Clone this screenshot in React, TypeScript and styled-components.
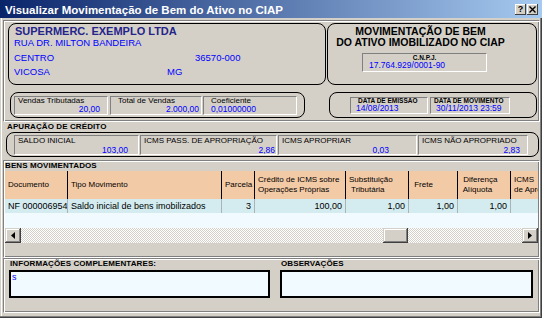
import styled, { createGlobalStyle } from "styled-components";

const UI = `"Liberation Sans", Arial, sans-serif`;

const GlobalStyle = createGlobalStyle`
  *, *::before, *::after { box-sizing: border-box; }
  html, body { margin: 0; padding: 0; background: #d4d0c8; }
  body { font-family: ${UI}; }
`;

const Window = styled.div`
  width: 542px;
  height: 318px;
  background: #d4d0c8;
  display: flex;
  flex-direction: column;
  overflow: hidden;
  font-family: ${UI};
  box-shadow: inset -1px -1px #404040, inset -2px -2px #808080,
    inset 1px 0 #d4d0c8, inset 2px 0 #ffffff;
`;

const TitleBar = styled.div`
  height: 18px;
  flex: none;
  display: flex;
  align-items: flex-start;
  justify-content: space-between;
  padding: 3px 4px 0 5px;
  background: linear-gradient(90deg, #0a246a 0%, #a6caf0 100%);
`;

const TitleText = styled.div`
  color: #fff;
  font-weight: bold;
  font-size: 11.5px;
  line-height: 15px;
  white-space: nowrap;
`;

const CaptionButtons = styled.div`
  display: flex;
  gap: 1px;
  margin-top: 1px;
`;

const CaptionButton = styled.div`
  width: 11px;
  height: 11px;
  display: flex;
  align-items: center;
  justify-content: center;
  background: #d4d0c8;
  box-shadow: inset -1px -1px #404040, inset 1px 1px #ffffff;
  font-size: 9px;
  font-weight: bold;
  line-height: 9px;
  color: #000;
`;

const Body = styled.div`
  flex: 1;
  display: flex;
  flex-direction: column;
  padding: 2px 2px 0 3px;
`;

const Etched = styled.div`
  border: 1px solid;
  border-color: #808080 #ffffff #ffffff #808080;
  box-shadow: inset 1px 1px #ffffff, inset -1px -1px #808080;
`;

const TopPanel = styled(Etched)`
  height: 102px;
  padding: 2px 2px 0 4px;
  display: flex;
  flex-direction: column;
`;

const Row = styled.div<{ $mt?: number; $h?: number }>`
  display: flex;
  align-items: stretch;
  height: ${(p) => p.$h ?? 62}px;
  margin-top: ${(p) => p.$mt ?? 0}px;
`;

const RoundBox = styled.div<{ $w?: number; $ml?: number }>`
  border: 1px solid #000;
  border-radius: 8px;
  width: ${(p) => (p.$w ? `${p.$w}px` : "auto")};
  margin-left: ${(p) => (p.$ml === undefined ? "0" : `${p.$ml}px`)};
`;

const CompanyBox = styled(RoundBox)`
  padding: 1px 0 0 5px;
  display: flex;
  flex-direction: column;
`;

const CompanyName = styled.div`
  color: #24248a;
  font-weight: bold;
  font-size: 11px;
  line-height: 12px;
  padding-left: 1px;
`;

const AddrLine = styled.div<{ $mt?: number }>`
  display: flex;
  color: #0000ff;
  font-size: 9.5px;
  line-height: 11px;
  margin-top: ${(p) => p.$mt ?? 0}px;
`;

const AddrCell = styled.span<{ $w?: number }>`
  width: ${(p) => (p.$w ? `${p.$w}px` : "auto")};
  flex: none;
`;

const HeadBox = styled(RoundBox)`
  flex: 1;
  margin-left: 1px;
  padding-top: 2px;
  display: flex;
  flex-direction: column;
`;

const HeadTitle = styled.div`
  text-align: center;
  padding-right: 23px;
  font-weight: bold;
  font-size: 10.5px;
  line-height: 11px;
  color: #000;
  white-space: nowrap;
`;

const Sunken = styled.div<{ $w: number; $h: number; $ml?: number; $mt?: number }>`
  width: ${(p) => p.$w}px;
  height: ${(p) => p.$h}px;
  margin-left: ${(p) => p.$ml ?? 0}px;
  margin-top: ${(p) => p.$mt ?? 0}px;
  flex: none;
  border: 1px solid;
  border-color: #808080 #ffffff #ffffff #808080;
  display: flex;
  flex-direction: column;
  overflow: hidden;
`;

const TinyLabel = styled.div<{ $pl?: number; $center?: boolean; $lh?: number }>`
  font-size: 6.5px;
  font-weight: bold;
  line-height: ${(p) => p.$lh ?? 6}px;
  color: #000;
  white-space: nowrap;
  padding-left: ${(p) => p.$pl ?? 0}px;
  text-align: ${(p) => (p.$center ? "center" : "left")};
`;

const FieldLabel = styled.div<{ $pl?: number; $lh?: number }>`
  font-size: 8px;
  line-height: ${(p) => p.$lh ?? 8}px;
  color: #000;
  white-space: nowrap;
  padding-left: ${(p) => p.$pl ?? 3}px;
`;

const FieldValue = styled.div<{
  $pl?: number;
  $pr?: number;
  $left?: boolean;
  $lh?: number;
}>`
  font-size: 8.5px;
  line-height: ${(p) => p.$lh ?? 9}px;
  color: #0000ff;
  white-space: nowrap;
  text-align: ${(p) => (p.$left ? "left" : "right")};
  padding-left: ${(p) => p.$pl ?? 0}px;
  padding-right: ${(p) => p.$pr ?? 0}px;
`;

const FieldRow = styled(RoundBox)<{ $pl: number; $gap?: number; $push?: boolean }>`
  display: flex;
  align-items: center;
  padding-left: ${(p) => p.$pl}px;
  gap: ${(p) => p.$gap ?? 0}px;
  ${(p) => (p.$push ? "margin-left: auto;" : "")}
`;

const SectionLabel = styled.div<{ $pl?: number }>`
  height: 10px;
  flex: none;
  font-size: 8px;
  font-weight: bold;
  line-height: 10px;
  color: #000;
  letter-spacing: 0.1px;
  padding-left: ${(p) => p.$pl ?? 0}px;
  white-space: nowrap;
`;

const ApurBox = styled(RoundBox)`
  height: 25px;
  margin: 0 1px 0 3px;
  display: flex;
  align-items: center;
  gap: 1px;
  padding-left: 7px;
`;

const GoodsPanel = styled(Etched)`
  height: 98px;
  margin-top: 3px;
  padding: 0 1px;
  display: flex;
  flex-direction: column;
`;

const Grid = styled.div`
  display: flex;
  flex-direction: column;
  overflow: hidden;
`;

const HeaderRow = styled.div`
  display: flex;
  height: 28px;
  background: #f3caa6;
`;

const HeadCell = styled.div<{ $w: number }>`
  width: ${(p) => p.$w}px;
  flex: none;
  border-right: 1px solid #000;
  display: flex;
  flex-direction: column;
  justify-content: center;
  padding-left: 3px;
  font-size: 8px;
  line-height: 10px;
  color: #000;
  white-space: pre;
  overflow: hidden;
`;

const DataRow = styled.div`
  display: flex;
  height: 14px;
  background: #d4ecf0;
`;

const DataCell = styled.div<{ $w: number; $right?: boolean }>`
  width: ${(p) => p.$w}px;
  flex: none;
  border-right: 1px solid #a8b4b8;
  padding: 0 3px;
  font-size: 9px;
  line-height: 14px;
  color: #000;
  white-space: nowrap;
  overflow: hidden;
  text-align: ${(p) => (p.$right ? "right" : "left")};
`;

const EmptyArea = styled.div`
  height: 15px;
  background: #f0faff;
`;

const ScrollBar = styled.div`
  height: 15px;
  display: flex;
`;

const raised = `
  background: #d4d0c8;
  box-shadow: inset -1px -1px #404040, inset 1px 1px #d4d0c8,
    inset -2px -2px #808080, inset 2px 2px #ffffff;
`;

const ScrollButton = styled.div`
  width: 16px;
  height: 15px;
  flex: none;
  display: flex;
  align-items: center;
  justify-content: center;
  ${raised}
`;

const ScrollTrack = styled.div`
  flex: 1;
  display: flex;
  background: repeating-conic-gradient(#d4d0c8 0 25%, #ffffff 0 50%) 0 0 / 2px 2px;
`;

const ScrollThumb = styled.div<{ $offset: number }>`
  width: 25px;
  height: 15px;
  margin-left: ${(p) => p.$offset}px;
  ${raised}
`;

const BottomPanel = styled(Etched)`
  height: 55px;
  padding: 0 4px 0 5px;
  display: flex;
  gap: 10px;
`;

const NoteColumn = styled.div<{ $w: number }>`
  width: ${(p) => p.$w}px;
  display: flex;
  flex-direction: column;
`;

const NoteBox = styled.div`
  height: 28px;
  margin-top: 1px;
  border: 2px solid #000;
  background: #f0faff;
  padding-left: 1px;
`;

const NoteText = styled.div`
  color: #0000ff;
  font-size: 9px;
  line-height: 10px;
`;

const columns = [
  { w: 63, head: ["Documento"], value: "NF 000006954", right: false },
  { w: 154, head: ["Tipo Movimento"], value: "Saldo inicial de bens imobilizados", right: false },
  { w: 33, head: ["Parcela"], value: "3", right: true },
  { w: 91, head: ["Crédito de ICMS sobre", "Operações Próprias"], value: "100,00", right: true },
  { w: 63, head: ["Substituição", " Tributária"], value: "1,00", right: true },
  { w: 49, head: [" Frete"], value: "1,00", right: true },
  { w: 53, head: [" Diferença", " Alíquota"], value: "1,00", right: true },
  { w: 90, head: ["ICMS", "de Apropriação"], value: "", right: true },
];

const credit = [
  { label: "SALDO INICIAL", value: "103,00", w: 125, pr: 10 },
  { label: "ICMS PASS. DE APROPRIAÇÃO", value: "2,86", w: 137, pr: 1 },
  { label: "ICMS APROPRIAR", value: "0,03", w: 139, pr: 27 },
  { label: "ICMS NÃO APROPRIADO", value: "2,83", w: 110, pr: 7 },
];

function ArrowLeft() {
  return (
    <svg width="4" height="7" viewBox="0 0 4 7">
      <polygon points="4,0 0,3.5 4,7" fill="#000" />
    </svg>
  );
}

function ArrowRight() {
  return (
    <svg width="4" height="7" viewBox="0 0 4 7">
      <polygon points="0,0 4,3.5 0,7" fill="#000" />
    </svg>
  );
}

function CloseGlyph() {
  return (
    <svg width="7" height="7" viewBox="0 0 7 7">
      <path d="M0.5 0.5 L6.5 6.5 M6.5 0.5 L0.5 6.5" stroke="#000" strokeWidth="1.4" />
    </svg>
  );
}

export default function App() {
  return (
    <>
      <GlobalStyle />
      <Window>
        <TitleBar>
          <TitleText>Visualizar Movimentação de Bem do Ativo no CIAP</TitleText>
          <CaptionButtons>
            <CaptionButton>?</CaptionButton>
            <CaptionButton>
              <CloseGlyph />
            </CaptionButton>
          </CaptionButtons>
        </TitleBar>

        <Body>
          <TopPanel>
            <Row>
              <CompanyBox $w={318}>
                <CompanyName>SUPERMERC. EXEMPLO LTDA</CompanyName>
                <AddrLine>RUA DR. MILTON BANDEIRA</AddrLine>
                <AddrLine $mt={4}>
                  <AddrCell $w={181}>CENTRO</AddrCell>
                  <AddrCell>36570-000</AddrCell>
                </AddrLine>
                <AddrLine $mt={3}>
                  <AddrCell $w={153}>VICOSA</AddrCell>
                  <AddrCell>MG</AddrCell>
                </AddrLine>
              </CompanyBox>
              <HeadBox>
                <HeadTitle>MOVIMENTAÇÃO DE BEM</HeadTitle>
                <HeadTitle>DO ATIVO IMOBILIZADO NO CIAP</HeadTitle>
                <Sunken $w={125} $h={19} $ml={34} $mt={5}>
                  <TinyLabel $center $lh={7}>
                    C.N.P.J.
                  </TinyLabel>
                  <FieldValue $left $pl={6}>
                    17.764.929/0001-90
                  </FieldValue>
                </Sunken>
              </HeadBox>
            </Row>

            <Row $mt={7} $h={26}>
              <FieldRow $w={295} $ml={2} $pl={3}>
                <Sunken $w={94} $h={19}>
                  <FieldLabel $pl={3}>Vendas Tributadas</FieldLabel>
                  <FieldValue $pr={7}>20,00</FieldValue>
                </Sunken>
                <Sunken $w={92} $h={19} $ml={2}>
                  <FieldLabel $pl={7}>Total de Vendas</FieldLabel>
                  <FieldValue $pr={2}>2.000,00</FieldValue>
                </Sunken>
                <Sunken $w={94} $h={19} $ml={1}>
                  <FieldLabel $pl={7}>Coeficiente</FieldLabel>
                  <FieldValue $left $pl={7}>
                    0,01000000
                  </FieldValue>
                </Sunken>
              </FieldRow>
              <FieldRow $w={208} $pl={20} $gap={2} $push>
                <Sunken $w={78} $h={17}>
                  <TinyLabel $pl={7}>DATA DE EMISSÃO</TinyLabel>
                  <FieldValue $left $pl={5}>
                    14/08/2013
                  </FieldValue>
                </Sunken>
                <Sunken $w={80} $h={17}>
                  <TinyLabel $pl={3}>DATA DE MOVIMENTO</TinyLabel>
                  <FieldValue $left $pl={5}>
                    30/11/2013 23:59
                  </FieldValue>
                </Sunken>
              </FieldRow>
            </Row>
          </TopPanel>

          <SectionLabel $pl={4}>APURAÇÃO DE CRÉDITO</SectionLabel>
          <ApurBox>
            {credit.map((c) => (
              <Sunken key={c.label} $w={c.w} $h={20}>
                <FieldLabel $lh={10}>{c.label}</FieldLabel>
                <FieldValue $pr={c.pr} $lh={8}>
                  {c.value}
                </FieldValue>
              </Sunken>
            ))}
          </ApurBox>

          <GoodsPanel>
            <SectionLabel>BENS MOVIMENTADOS</SectionLabel>
            <Grid>
              <HeaderRow>
                {columns.map((c, i) => (
                  <HeadCell key={i} $w={c.w}>
                    {c.head.map((h) => (
                      <span key={h}>{h}</span>
                    ))}
                  </HeadCell>
                ))}
              </HeaderRow>
              <DataRow>
                {columns.map((c, i) => (
                  <DataCell key={i} $w={c.w} $right={c.right}>
                    {c.value}
                  </DataCell>
                ))}
              </DataRow>
              <EmptyArea />
              <ScrollBar>
                <ScrollButton>
                  <ArrowLeft />
                </ScrollButton>
                <ScrollTrack>
                  <ScrollThumb $offset={362} />
                </ScrollTrack>
                <ScrollButton>
                  <ArrowRight />
                </ScrollButton>
              </ScrollBar>
            </Grid>
          </GoodsPanel>

          <BottomPanel>
            <NoteColumn $w={261}>
              <SectionLabel $pl={1}>INFORMAÇÕES COMPLEMENTARES:</SectionLabel>
              <NoteBox>
                <NoteText>s</NoteText>
              </NoteBox>
            </NoteColumn>
            <NoteColumn $w={253}>
              <SectionLabel $pl={1}>OBSERVAÇÕES</SectionLabel>
              <NoteBox />
            </NoteColumn>
          </BottomPanel>
        </Body>
      </Window>
    </>
  );
}
